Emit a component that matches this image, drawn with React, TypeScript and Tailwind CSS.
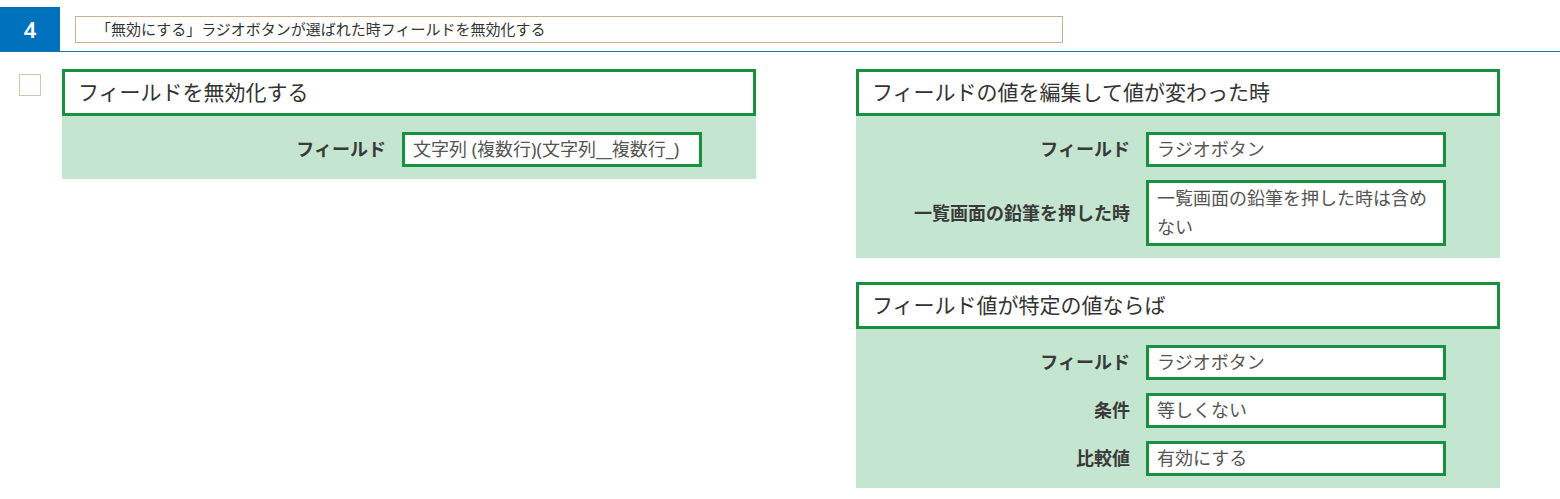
import React from "react";

const font = { fontFamily: '"Noto Sans", "Noto Sans CJK JP", sans-serif' };

type Row = { label: string; value: string; wrap?: boolean };

function Field({ label, value, wrap }: Row) {
  return (
    <div className="flex items-center justify-end gap-4">
      <div className="text-[18px] font-bold text-[#3a3a3a]">{label}</div>
      <div
        className={`w-[300px] border-[3px] border-[#17903f] bg-white px-2 text-[18px] leading-[29px] text-[#555] ${
          wrap ? "h-[66px] pt-[1px]" : "h-[35px] whitespace-nowrap overflow-hidden"
        }`}
      >
        {value}
      </div>
    </div>
  );
}

function Card({ title, rows, width }: { title: string; rows: Row[]; width: string }) {
  return (
    <div className={width}>
      <div className="h-[47px] border-[3px] border-[#17903f] bg-white pl-[13px] flex items-center text-[21px] text-[#333]">
        {title}
      </div>
      <div className="bg-[#c4e5cf] pt-[16px] pb-[12px] pr-[54px] flex flex-col gap-[13px]">
        {rows.map((r) => (
          <Field key={r.label} {...r} />
        ))}
      </div>
    </div>
  );
}

export default function App() {
  return (
    <div className="w-[1560px] h-[499px] bg-white" style={font}>
      <div className="flex items-end border-b border-[#1f6fa8] pt-[7px]">
        <div className="w-[60px] h-[44px] bg-[#0071bc] flex items-center justify-center text-white text-[22px] font-semibold">
          4
        </div>
        <div className="ml-[15px] mb-[8px] w-[988px] h-[27px] border border-[#cdb090] flex items-center pl-[20px] text-[15px] text-[#333]">
          「無効にする」ラジオボタンが選ばれた時フィールドを無効化する
        </div>
      </div>
      <div className="flex pt-[17px]">
        <div className="ml-[19px] mt-[5px] w-[22px] h-[22px] border border-[#d6c2ab] bg-white" />
        <div className="ml-[21px]">
          <Card
            width="w-[694px]"
            title="フィールドを無効化する"
            rows={[{ label: "フィールド", value: "文字列 (複数行)(文字列__複数行_)" }]}
          />
        </div>
        <div className="ml-[100px] flex flex-col gap-[24px]">
          <Card
            width="w-[644px]"
            title="フィールドの値を編集して値が変わった時"
            rows={[
              { label: "フィールド", value: "ラジオボタン" },
              { label: "一覧画面の鉛筆を押した時", value: "一覧画面の鉛筆を押した時は含めない", wrap: true },
            ]}
          />
          <Card
            width="w-[644px]"
            title="フィールド値が特定の値ならば"
            rows={[
              { label: "フィールド", value: "ラジオボタン" },
              { label: "条件", value: "等しくない" },
              { label: "比較値", value: "有効にする" },
            ]}
          />
        </div>
      </div>
    </div>
  );
}
